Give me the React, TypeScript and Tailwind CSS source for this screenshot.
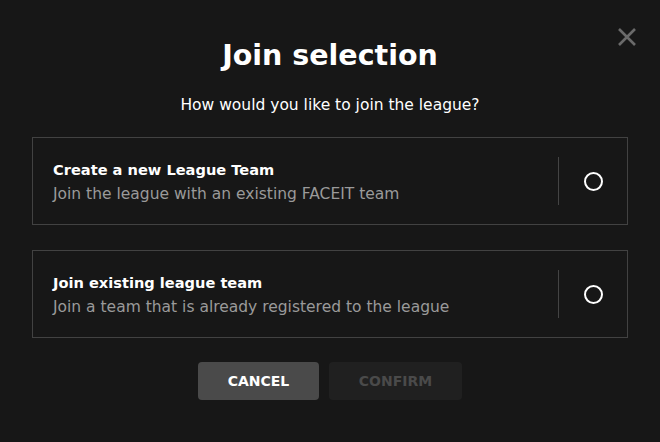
import React from "react";

const font = { fontFamily: '"DejaVu Sans", "Noto Sans", sans-serif' };

function Option({ title, desc }: { title: string; desc: string }) {
  return (
    <div className="flex h-[88px] items-center border border-[#424242] pl-[20px]">
      <div className="flex flex-1 flex-col pt-[2px]">
        <div className="text-[14.6px] font-bold leading-[20px] text-white">{title}</div>
        <div className="mt-[4px] text-[15.5px] leading-[20px] text-[#9a9a9a]">{desc}</div>
      </div>
      <div className="h-[48px] w-px bg-[#444]" />
      <div className="flex w-[68px] items-center justify-center">
        <div className="h-[19px] w-[19px] rounded-full border-2 border-white" />
      </div>
    </div>
  );
}

export default function App() {
  return (
    <div className="relative h-[442px] w-[660px] bg-[#171717]" style={font}>
      <button className="absolute right-[22px] top-[26px] text-[#6a6a6a]">
        <svg width="22" height="22" viewBox="0 0 22 22" fill="none" stroke="currentColor" strokeWidth="2.6">
          <path d="M3 3 L19 19 M19 3 L3 19" />
        </svg>
      </button>
      <div className="flex flex-col items-center pt-[36px]">
        <h1 className="text-[28.5px] font-bold leading-[40px] text-white">Join selection</h1>
        <p className="mt-[19px] text-[15.5px] leading-[20px] text-white">How would you like to join the league?</p>
      </div>
      <div className="mx-[32px] mt-[22px] flex flex-col gap-[25px]">
        <Option title="Create a new League Team" desc="Join the league with an existing FACEIT team" />
        <Option title="Join existing league team" desc="Join a team that is already registered to the league" />
      </div>
      <div className="mt-[24px] flex justify-center gap-[10px]">
        <button className="h-[38px] w-[121px] rounded-[4px] bg-[#4a4a4a] text-[14px] font-bold text-white">CANCEL</button>
        <button className="h-[38px] w-[133px] rounded-[4px] bg-[#202020] text-[14px] font-bold text-[#4a4a4a]">CONFIRM</button>
      </div>
    </div>
  );
}
